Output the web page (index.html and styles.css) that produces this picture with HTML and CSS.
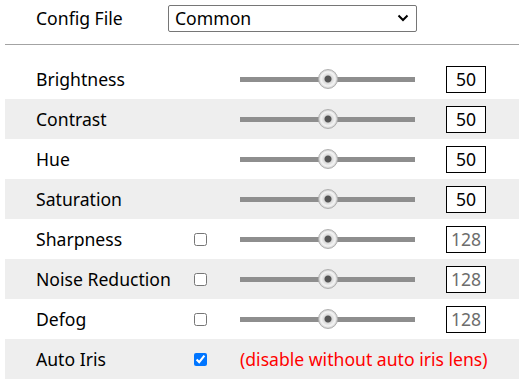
FILE: index.html
```html
<!DOCTYPE html>
<html lang="en">
<head>
    <meta charset="UTF-8">
    <title>Image Settings</title>
    <link rel="stylesheet" href="styles.css">
</head>
<body>
    <div class="config-row">
        <span class="config-label">Config File</span>
        <select class="config-select">
            <option>Common</option>
            <option>Day</option>
            <option>Night</option>
        </select>
    </div>

    <div class="settings">
        <div class="row">
            <span class="label">Brightness</span>
            <span></span>
            <input type="range" class="slider" min="0" max="100" value="50">
            <input type="text" class="num" value="50">
        </div>
        <div class="row alt">
            <span class="label">Contrast</span>
            <span></span>
            <input type="range" class="slider" min="0" max="100" value="50">
            <input type="text" class="num" value="50">
        </div>
        <div class="row">
            <span class="label">Hue</span>
            <span></span>
            <input type="range" class="slider" min="0" max="100" value="50">
            <input type="text" class="num" value="50">
        </div>
        <div class="row alt">
            <span class="label">Saturation</span>
            <span></span>
            <input type="range" class="slider" min="0" max="100" value="50">
            <input type="text" class="num" value="50">
        </div>
        <div class="row">
            <span class="label">Sharpness</span>
            <input type="checkbox" class="check">
            <input type="range" class="slider" min="0" max="255" value="128">
            <input type="text" class="num" value="128" disabled>
        </div>
        <div class="row alt">
            <span class="label">Noise Reduction</span>
            <input type="checkbox" class="check">
            <input type="range" class="slider" min="0" max="255" value="128">
            <input type="text" class="num" value="128" disabled>
        </div>
        <div class="row">
            <span class="label">Defog</span>
            <input type="checkbox" class="check">
            <input type="range" class="slider" min="0" max="255" value="128">
            <input type="text" class="num" value="128" disabled>
        </div>
        <div class="row alt">
            <span class="label">Auto Iris</span>
            <input type="checkbox" class="check" checked>
            <span class="note">(disable without auto iris lens)</span>
        </div>
    </div>
</body>
</html>
```

FILE: styles.css
```css
body {
    margin: 0;
    padding: 0;
    background: #fff;
    color: #000;
    font-family: 'Noto Sans', 'Open Sans', sans-serif;
    font-size: 17.6px;
}
.config-row {
    display: flex;
    align-items: center;
    height: 35px;
    padding-left: 36px;
}
.config-label {
    width: 132px;
}
.config-select {
    -webkit-appearance: none;
    appearance: none;
    width: 249px;
    height: 27px;
    margin-top: 1px;
    font-family: inherit;
    font-size: 17.6px;
    line-height: 25px;
    color: #000;
    border: 1px solid #767676;
    border-radius: 2px;
    padding: 0 6px;
    background: #fff url("data:image/svg+xml,%3Csvg xmlns='http://www.w3.org/2000/svg' width='12' height='8' viewBox='0 0 12 8'%3E%3Cpath d='M1.5 1.5 6 6 10.5 1.5' fill='none' stroke='%23000' stroke-width='2'/%3E%3C/svg%3E") no-repeat right 7px center;
}
.settings {
    margin-left: 5px;
    margin-top: 9px;
    border-top: 1px solid #a3a3a3;
    padding-top: 14px;
}
.row {
    display: grid;
    grid-template-columns: 157px 47px 175px 40px;
    align-items: center;
    height: 40px;
    padding-left: 31px;
}
.row .num {
    margin-left: 31px;
}
.row.alt {
    background: #eeeeee;
}
.check {
    width: 13px;
    height: 13px;
    margin: 0 0 0 1px;
}
.slider {
    -webkit-appearance: none;
    appearance: none;
    width: 175px;
    height: 5px;
    margin: 0;
    background: #8e8e8e;
    outline: none;
}
.slider::-webkit-slider-thumb {
    -webkit-appearance: none;
    appearance: none;
    width: 20px;
    height: 20px;
    border-radius: 50%;
    border: 1px solid #b0b0b0;
    box-sizing: border-box;
    background: radial-gradient(circle, #555 0, #555 3px, #d8d8d8 4px, #f4f4f4 7px, #c4c4c4 10px);
}
.num {
    width: 40px;
    height: 27px;
    box-sizing: border-box;
    border: 1px solid #000;
    padding: 0;
    text-align: center;
    font-family: inherit;
    font-size: 17.6px;
    color: #000;
    background: #fff;
}
.num:disabled {
    color: #6d6d6d;
    background: #fff;
}
.note {
    grid-column: 3 / 5;
    color: #ff0000;
    white-space: nowrap;
}
```
